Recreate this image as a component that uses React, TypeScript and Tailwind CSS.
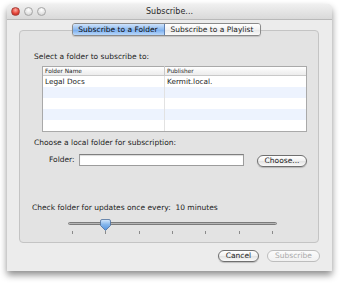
const rows = [
  { name: 'Legal Docs', publisher: 'Kermit.local.' },
  { name: '', publisher: '' },
  { name: '', publisher: '' },
  { name: '', publisher: '' },
  { name: '', publisher: '' },
]

function TrafficLight({ red }: { red?: boolean }) {
  return (
    <span
      className={
        red
          ? 'block size-[9px] rounded-full border border-[#a8403a] bg-[radial-gradient(circle_at_50%_30%,#ffb0a6_0%,#e5473c_55%,#b8231b_100%)]'
          : 'block size-[9px] rounded-full border border-[#a6a6a6] bg-[radial-gradient(circle_at_50%_30%,#ffffff_0%,#e2e2e2_60%,#c6c6c6_100%)]'
      }
    />
  )
}

function SliderThumb() {
  return (
    <svg width="11" height="12" viewBox="0 0 11 12" aria-hidden>
      <defs>
        <linearGradient id="thumb" x1="0" y1="0" x2="0" y2="1">
          <stop offset="0" stopColor="#d6e8fb" />
          <stop offset="0.45" stopColor="#86b7ec" />
          <stop offset="1" stopColor="#4f8fdc" />
        </linearGradient>
      </defs>
      <path
        d="M2 .5h7a1.5 1.5 0 011.5 1.5v4.5L5.5 11.5.5 6.5V2A1.5 1.5 0 012 .5z"
        fill="url(#thumb)"
        stroke="#4d6f9c"
        strokeWidth="0.8"
      />
    </svg>
  )
}

export default function App() {
  return (
    <div className="h-[284px] w-[340px] overflow-hidden bg-white pl-[7px] pt-[4px] font-['DejaVu_Sans',sans-serif] text-[7.5px] leading-[10px] text-[#1c1c1c]">
      <div className="flex h-[267px] w-[325px] flex-col rounded-t-[5px] bg-[#ececec] shadow-[0_4px_7px_rgba(0,0,0,0.45)]">
        {/* title bar */}
        <div className="flex h-[16px] items-center rounded-t-[5px] border-b border-[#b9b9b9] bg-[linear-gradient(#f0f0f0,#d9d9d9)] px-[4px]">
          <div className="flex w-[40px] gap-[4px]">
            <TrafficLight red />
            <TrafficLight />
            <TrafficLight />
          </div>
          <div className="flex-1 text-center text-[8px] text-[#2a2a2a]">Subscribe...</div>
          <div className="w-[40px]" />
        </div>

        {/* group box */}
        <div className="ml-[12px] mt-[10px] flex h-[213px] w-[300px] flex-col rounded-[4px] border border-[#c4c4c4] bg-[#e3e3e3]">
          <div className="-mt-[8px] flex justify-center">
            <div className="ml-[-6px] flex h-[13px] overflow-hidden rounded-[3px] border border-[#8a8a8a] shadow-[0_1px_1px_rgba(0,0,0,0.15)]">
              <div className="flex w-[92px] items-center justify-center border-r border-[#5f81b3] bg-[linear-gradient(#cfe3fb,#8dbaf0_50%,#74aaed_51%,#b9d8fb)] text-[#0d0d0d]">
                Subscribe to a Folder
              </div>
              <div className="flex w-[95px] items-center justify-center bg-[linear-gradient(#ffffff,#f2f2f2_50%,#e6e6e6_51%,#fbfbfb)]">
                Subscribe to a Playlist
              </div>
            </div>
          </div>

          <div className="ml-[14px] mt-[16px]">Select a folder to subscribe to:</div>

          <div className="ml-[22px] mt-[4px] w-[265px] border border-[#a9a9a9] bg-white">
            <div className="flex h-[9px] items-center border-b border-[#c9c9c9] bg-[linear-gradient(#ffffff,#ececec)] text-[5.8px]">
              <div className="w-[122px] border-r border-[#c9c9c9] pl-[2px]">Folder Name</div>
              <div className="pl-[2px]">Publisher</div>
            </div>
            {rows.map((r, i) => (
              <div
                key={i}
                className={`flex h-[11px] items-center text-[7.3px] ${i % 2 === 1 ? 'bg-[#edf3fe]' : 'bg-white'} ${i === 4 ? 'h-[10px]' : ''}`}
              >
                <div className="h-full w-[122px] border-r border-[#e2e2e2] pl-[2px] leading-[11px]">{r.name}</div>
                <div className="pl-[2px] leading-[11px]">{r.publisher}</div>
              </div>
            ))}
          </div>

          <div className="ml-[14px] mt-[6px]">Choose a local folder for subscription:</div>

          <div className="mt-[5px] flex items-center">
            <div className="ml-[29px] w-[30px]">Folder:</div>
            <div className="h-[12px] w-[165px] border border-[#9c9c9c] border-t-[#7f7f7f] bg-white shadow-[inset_0_1px_1px_rgba(0,0,0,0.15)]" />
            <div className="ml-[13px] mt-[2px] flex h-[12px] w-[50px] items-center justify-center rounded-full border border-[#6f6f6f] bg-[linear-gradient(#ffffff,#f1f1f1_50%,#e2e2e2_51%,#fafafa)] shadow-[0_1px_1px_rgba(0,0,0,0.2)]">
              Choose...
            </div>
          </div>

          <div className="ml-[12px] mt-[36px]">Check folder for updates once every:&nbsp; 10 minutes</div>

          <div className="ml-[48px] mt-[6px] w-[209px]">
            <div className="relative h-[11px]">
              <div className="absolute left-0 right-0 top-[3px] h-[3px] rounded-full border border-[#7b7b7b] bg-[linear-gradient(#9a9a9a,#d2d2d2)]" />
              <div className="absolute left-[32px] top-0">
                <SliderThumb />
              </div>
            </div>
            <div className="mt-[1px] flex justify-between px-[4px]">
              {Array.from({ length: 7 }).map((_, i) => (
                <span key={i} className="block h-[3px] w-px bg-[#8a8a8a]" />
              ))}
            </div>
          </div>
        </div>

        {/* bottom buttons */}
        <div className="mr-[12px] mt-[7px] flex justify-end gap-[8px]">
          <div className="flex h-[12px] w-[41px] items-center justify-center rounded-full border border-[#6f6f6f] bg-[linear-gradient(#ffffff,#f1f1f1_50%,#e2e2e2_51%,#fafafa)] shadow-[0_1px_1px_rgba(0,0,0,0.2)]">
            Cancel
          </div>
          <div className="flex h-[12px] w-[53px] items-center justify-center rounded-full border border-[#bdbdbd] bg-[linear-gradient(#fbfbfb,#f1f1f1)] text-[#a9a9a9]">
            Subscribe
          </div>
        </div>
      </div>
    </div>
  )
}
